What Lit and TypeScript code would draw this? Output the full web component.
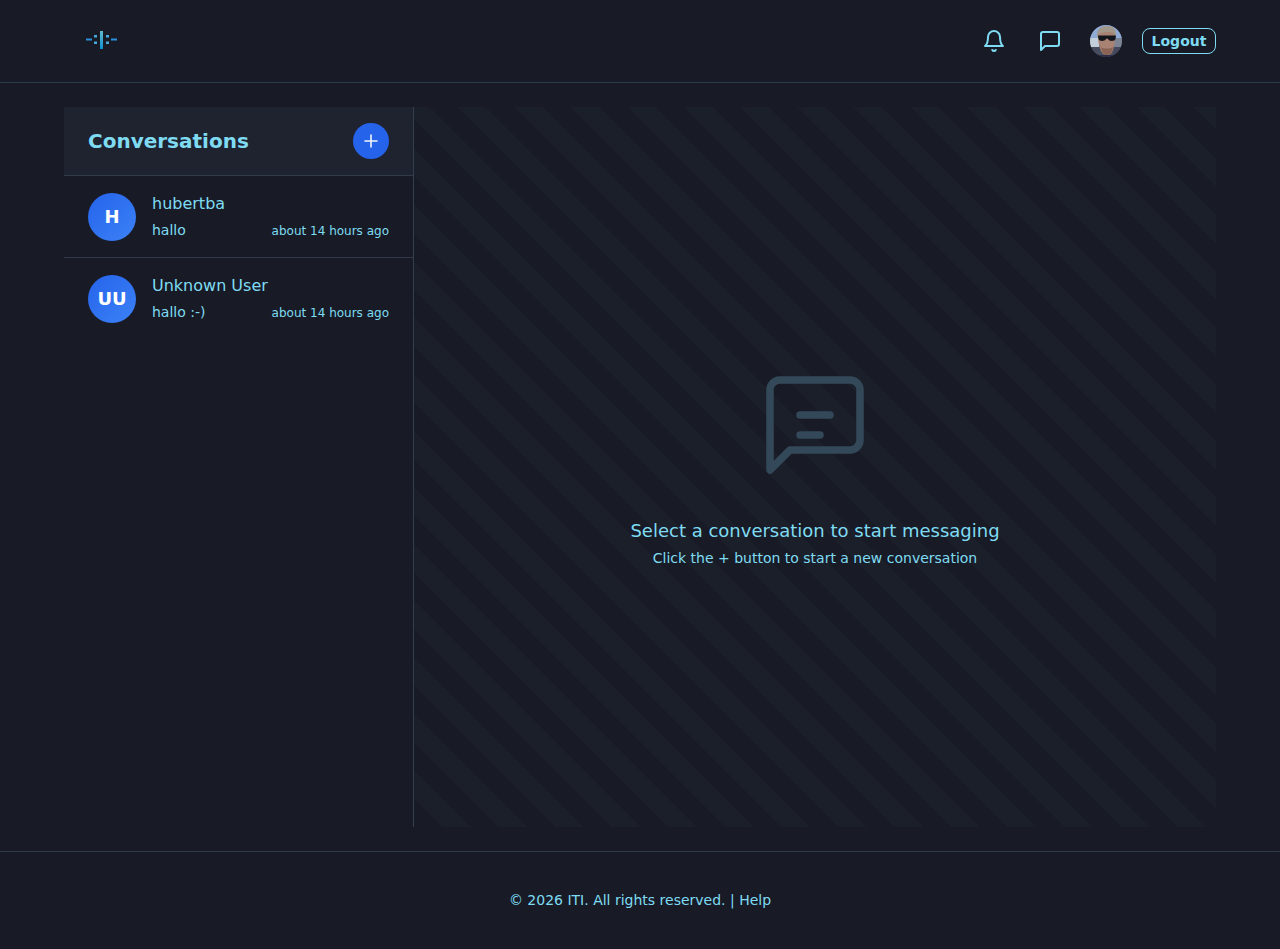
import { LitElement, css, html, svg } from 'lit';
import { customElement } from 'lit/decorators.js';

const conversations = [
  { initials: 'H', name: 'hubertba', last: 'hallo', time: 'about 14 hours ago' },
  { initials: 'UU', name: 'Unknown User', last: 'hallo :-)', time: 'about 14 hours ago' },
];

// photo stand-in, drawn small and blurred so it reads like the scaled down jpeg
const avatarArt = svg`
  <defs>
    <clipPath id="round"><circle cx="16" cy="16" r="16" /></clipPath>
    <filter id="soft"><feGaussianBlur stdDeviation="0.7" /></filter>
  </defs>
  <g clip-path="url(#round)">
    <rect width="32" height="32" fill="#4a4f60" />
    <g filter="url(#soft)">
      <rect x="-2" y="-2" width="36" height="16" fill="#8fabd6" />
      <rect x="-2" y="13" width="11" height="10" fill="#c3d0dc" />
      <rect x="24" y="13" width="10" height="9" fill="#7d8594" />
      <rect x="-2" y="22" width="11" height="12" fill="#474c5e" />
      <rect x="24" y="22" width="10" height="12" fill="#45465c" />
      <path d="M7 10c0-6 4-9 10-9s9 3 9 9v2H7z" fill="#a3978a" />
      <path d="M8 11c0-2 3-4 9-4s8 2 8 4c0 8-2 20-8 20s-9-12-9-20z" fill="#a88272" />
      <path d="M11 22c2 2 10 2 12 0-1 5-3 9-6 9s-5-4-6-9z" fill="#8a6256" />
      <rect x="-2" y="30" width="36" height="4" fill="#2c2e4c" />
    </g>
    <path
      d="M8 10.500h18l-.5 3.500c-.5 2-4 2.500-6 1.500-1-.5-1.500-2-2.500-2s-1.500 1.500-2.500 2c-2 1-5.500.5-6-1.500z"
      fill="#14161d"
    />
  </g>
`;

@customElement('app-root')
export class AppRoot extends LitElement {
  static styles = css`
    :host {
      display: flex;
      flex-direction: column;
      min-height: 100vh;
      background: #181b26;
      color: #7fdbf2;
      font-family: 'DejaVu Sans', sans-serif;
    }
    .topbar {
      display: flex;
      align-items: center;
      justify-content: space-between;
      height: 82px;
      padding: 0 64px;
      border-bottom: 1px solid #2c3c4b;
    }
    .logo {
      display: block;
      width: 76px;
      height: 82px;
    }
    .actions {
      display: flex;
      align-items: center;
    }
    .icon-btn {
      display: flex;
      padding: 8px;
      margin-left: 16px;
    }
    .icon-btn svg {
      width: 24px;
      height: 24px;
      fill: none;
      stroke: currentColor;
      stroke-width: 2;
      stroke-linecap: round;
      stroke-linejoin: round;
    }
    .me {
      display: block;
      width: 32px;
      height: 32px;
      margin-left: 20px;
    }
    .logout {
      margin-left: 20px;
      width: 72px;
      height: 24px;
      line-height: 24px;
      text-align: center;
      border: 1px solid #7fdbf2;
      border-radius: 8px;
      font-size: 14px;
      font-weight: 700;
    }
    main {
      flex: 1;
      display: flex;
      padding: 24px 64px;
    }
    .sidebar {
      width: 350px;
      box-sizing: border-box;
      border-right: 1px solid #323f4d;
    }
    .side-head {
      display: flex;
      align-items: center;
      justify-content: space-between;
      height: 68px;
      padding: 0 24px;
      background: #1f2330;
      border-bottom: 1px solid #323b49;
    }
    .side-head h2 {
      margin: 0;
      font-size: 20px;
      font-weight: 700;
    }
    .add {
      display: flex;
      align-items: center;
      justify-content: center;
      width: 36px;
      height: 36px;
      border-radius: 50%;
      background: #2563eb;
    }
    .add svg {
      width: 20px;
      height: 20px;
      fill: none;
      stroke: #f2f6ff;
      stroke-width: 1.6;
      stroke-linecap: round;
    }
    .row {
      display: flex;
      align-items: center;
      gap: 16px;
      height: 81px;
      padding: 0 24px;
      border-bottom: 1px solid #323b49;
    }
    .row:last-child {
      border-bottom: none;
    }
    .badge {
      flex: none;
      display: flex;
      align-items: center;
      justify-content: center;
      width: 48px;
      height: 48px;
      border-radius: 50%;
      background: linear-gradient(135deg, #2563eb, #3b82f6);
      color: #fff;
      font-size: 18px;
      font-weight: 700;
    }
    .info {
      flex: 1;
      min-width: 0;
      padding-bottom: 1px;
    }
    .name {
      font-size: 16px;
      line-height: 24px;
    }
    .sub {
      display: flex;
      align-items: baseline;
      justify-content: space-between;
      margin-top: 4px;
      font-size: 14px;
      line-height: 20px;
    }
    .time {
      font-size: 12px;
    }
    .panel {
      flex: 1;
      display: flex;
      flex-direction: column;
      align-items: center;
      justify-content: center;
      background: repeating-linear-gradient(
        45deg,
        transparent,
        transparent 20px,
        #1b1f2a 20px,
        #1b1f2a 40px
      );
    }
    .empty-icon {
      width: 120px;
      height: 120px;
      margin-bottom: 32px;
      fill: none;
      stroke: #33495a;
      stroke-width: 1.5;
      stroke-linecap: round;
      stroke-linejoin: round;
    }
    .panel h3 {
      margin: 0;
      font-size: 18px;
      line-height: 28px;
      font-weight: 400;
    }
    .panel p {
      margin: 3px 0 0;
      padding-bottom: 1px;
      font-size: 14px;
      line-height: 20px;
    }
    footer {
      height: 96px;
      padding-bottom: 1px;
      display: flex;
      align-items: center;
      justify-content: center;
      border-top: 1px solid #323b49;
      font-size: 14px;
    }
  `;

  renderLogo() {
    return html`
      <svg class="logo" viewBox="0 0 76 82">
        <defs>
          <linearGradient id="bar" x1="0" y1="0" x2="0" y2="1">
            <stop offset="0" stop-color="#62bccf" />
            <stop offset="1" stop-color="#0e8fd0" />
          </linearGradient>
        </defs>
        <rect x="36" y="31" width="3" height="18" fill="url(#bar)" />
        <rect x="22" y="38.500" width="6" height="2" fill="#2b8fdc" />
        <rect x="47" y="38.500" width="6" height="2" fill="#2b8fdc" />
        <rect x="30" y="35" width="3" height="2.500" fill="#45a9dc" />
        <rect x="30" y="41.500" width="3" height="2.500" fill="#45a9dc" />
        <rect x="42" y="35" width="3" height="2.500" fill="#45a9dc" />
        <rect x="42" y="41.500" width="3" height="2.500" fill="#45a9dc" />
      </svg>
    `;
  }

  render() {
    return html`
      <header class="topbar">
        ${this.renderLogo()}
        <div class="actions">
          <span class="icon-btn">
            <svg viewBox="0 0 24 24">
              <path d="M6 8a6 6 0 0 1 12 0c0 7 3 9 3 9H3s3-2 3-9" />
              <path d="M10.300 21a1.940 1.940 0 0 0 3.400 0" />
            </svg>
          </span>
          <span class="icon-btn">
            <svg viewBox="0 0 24 24">
              <path d="M21 15a2 2 0 0 1-2 2H7l-4 4V5a2 2 0 0 1 2-2h14a2 2 0 0 1 2 2z" />
            </svg>
          </span>
          <svg class="me" viewBox="0 0 32 32">${avatarArt}</svg>
          <span class="logout">Logout</span>
        </div>
      </header>
      <main>
        <aside class="sidebar">
          <div class="side-head">
            <h2>Conversations</h2>
            <span class="add">
              <svg viewBox="0 0 20 20"><path d="M10 4v12M4 10h12" /></svg>
            </span>
          </div>
          ${conversations.map(
            c => html`
              <div class="row">
                <div class="badge">${c.initials}</div>
                <div class="info">
                  <div class="name">${c.name}</div>
                  <div class="sub">
                    <span>${c.last}</span>
                    <span class="time">${c.time}</span>
                  </div>
                </div>
              </div>
            `,
          )}
        </aside>
        <section class="panel">
          <svg class="empty-icon" viewBox="0 0 24 24">
            <path d="M21 15a2 2 0 0 1-2 2H7l-4 4V5a2 2 0 0 1 2-2h14a2 2 0 0 1 2 2z" />
            <path d="M9 10h6M9 14h4" />
          </svg>
          <h3>Select a conversation to start messaging</h3>
          <p>Click the + button to start a new conversation</p>
        </section>
      </main>
      <footer>© 2026 ITI. All rights reserved. | Help</footer>
    `;
  }
}
